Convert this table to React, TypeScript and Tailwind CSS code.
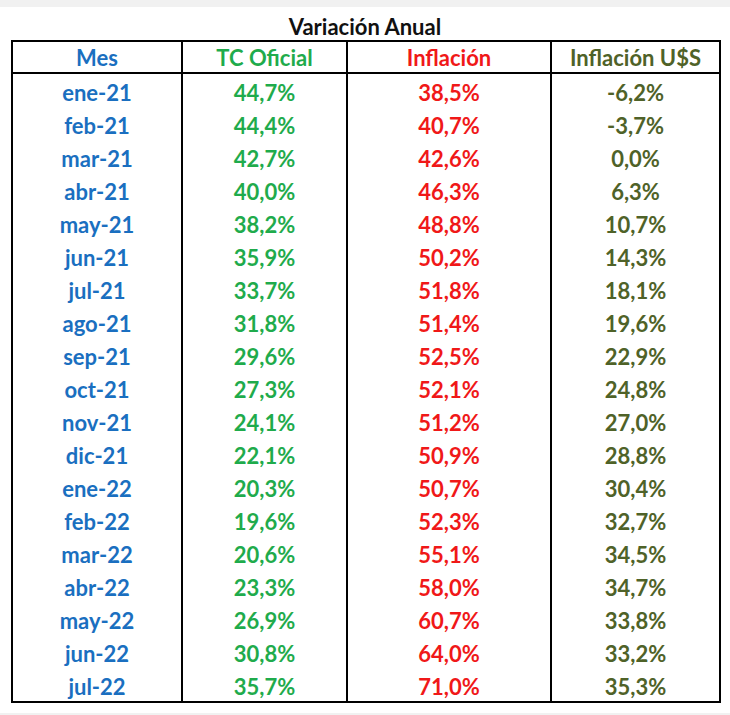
const rows: [string, string, string, string][] = [
  ["ene-21", "44,7%", "38,5%", "-6,2%"],
  ["feb-21", "44,4%", "40,7%", "-3,7%"],
  ["mar-21", "42,7%", "42,6%", "0,0%"],
  ["abr-21", "40,0%", "46,3%", "6,3%"],
  ["may-21", "38,2%", "48,8%", "10,7%"],
  ["jun-21", "35,9%", "50,2%", "14,3%"],
  ["jul-21", "33,7%", "51,8%", "18,1%"],
  ["ago-21", "31,8%", "51,4%", "19,6%"],
  ["sep-21", "29,6%", "52,5%", "22,9%"],
  ["oct-21", "27,3%", "52,1%", "24,8%"],
  ["nov-21", "24,1%", "51,2%", "27,0%"],
  ["dic-21", "22,1%", "50,9%", "28,8%"],
  ["ene-22", "20,3%", "50,7%", "30,4%"],
  ["feb-22", "19,6%", "52,3%", "32,7%"],
  ["mar-22", "20,6%", "55,1%", "34,5%"],
  ["abr-22", "23,3%", "58,0%", "34,7%"],
  ["may-22", "26,9%", "60,7%", "33,8%"],
  ["jun-22", "30,8%", "64,0%", "33,2%"],
  ["jul-22", "35,7%", "71,0%", "35,3%"],
];

export default function App() {
  return (
    <div
      className="w-[730px] h-[715px] bg-white flex flex-col text-[22px] font-bold"
      style={{ fontFamily: "Lato, 'Open Sans', sans-serif" }}
    >
      <div className="h-[7px] bg-[#f1f1f1]" />
      <div className="h-[33px] flex items-center justify-center text-[#111] leading-none pt-[6px]">
        Variación Anual
      </div>
      <div className="ml-[11px] w-[710px] border-2 border-black flex leading-none">
        <div className="w-[170px] border-r-2 border-black text-[#1a6fc0]">
          <div className="h-[32px] pt-[2px] border-b-2 border-black flex items-center justify-center">Mes</div>
          {rows.map((r) => (
            <div key={r[0]} className="h-[33px] pt-[4px] flex items-center justify-center">{r[0]}</div>
          ))}
        </div>
        <div className="w-[165px] border-r-2 border-black text-[#1fab4c]">
          <div className="h-[32px] pt-[2px] border-b-2 border-black flex items-center justify-center">TC Oficial</div>
          {rows.map((r) => (
            <div key={r[0]} className="h-[33px] pt-[4px] flex items-center justify-center">{r[1]}</div>
          ))}
        </div>
        <div className="w-[204px] border-r-2 border-black text-[#f01818]">
          <div className="h-[32px] pt-[2px] border-b-2 border-black flex items-center justify-center">Inflación</div>
          {rows.map((r) => (
            <div key={r[0]} className="h-[33px] pt-[4px] flex items-center justify-center">{r[2]}</div>
          ))}
        </div>
        <div className="flex-1 text-[#4f6228]">
          <div className="h-[32px] pt-[2px] border-b-2 border-black flex items-center justify-center">Inflación U$S</div>
          {rows.map((r) => (
            <div key={r[0]} className="h-[33px] pt-[4px] flex items-center justify-center">{r[3]}</div>
          ))}
        </div>
      </div>
      <div className="flex-1" />
      <div className="h-[2px] bg-[#f1f1f1]" />
    </div>
  );
}
